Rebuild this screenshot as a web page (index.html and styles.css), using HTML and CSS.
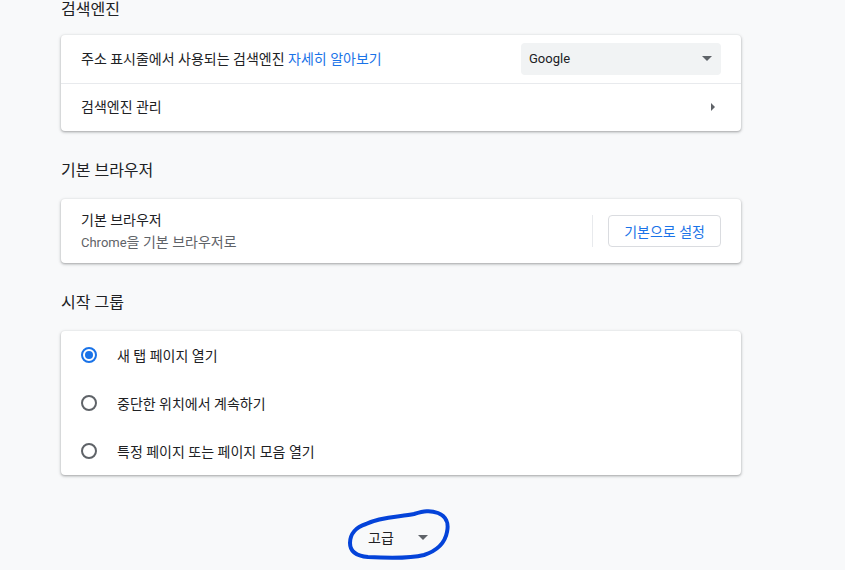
FILE: index.html
```html
<!DOCTYPE html>
<html lang="ko">
<head>
    <meta charset="UTF-8">
    <title>설정</title>
    <link rel="stylesheet" href="styles.css">
</head>
<body>
    <main class="page">
        <h2 class="section-title first">검색엔진</h2>
        <div class="card">
            <div class="row">
                <div class="row-label">주소 표시줄에서 사용되는 검색엔진 <a href="#" class="link">자세히 알아보기</a></div>
                <div class="select">
                    <span class="latin">Google</span>
                    <span class="select-arrow"></span>
                </div>
            </div>
            <div class="row divided">
                <div class="row-label">검색엔진 관리</div>
                <span class="sub-arrow"></span>
            </div>
        </div>

        <h2 class="section-title">기본 브라우저</h2>
        <div class="card">
            <div class="row tall">
                <div class="row-label">
                    <div>기본 브라우저</div>
                    <div class="secondary"><span class="latin">Chrome</span>을 기본 브라우저로</div>
                </div>
                <div class="separator"></div>
                <button type="button" class="btn">기본으로 설정</button>
            </div>
        </div>

        <h2 class="section-title">시작 그룹</h2>
        <div class="card">
            <label class="radio-row">
                <span class="radio checked"></span>
                <span>새 탭 페이지 열기</span>
            </label>
            <label class="radio-row">
                <span class="radio"></span>
                <span>중단한 위치에서 계속하기</span>
            </label>
            <label class="radio-row">
                <span class="radio"></span>
                <span>특정 페이지 또는 페이지 모음 열기</span>
            </label>
        </div>

        <div class="advanced">
            <span>고급</span>
            <span class="select-arrow"></span>
            <!-- 손으로 그린 표시 -->
            <svg class="scribble" width="110" height="54" viewBox="0 0 110 54">
                <path d="M20 17 C 35 9, 55 10, 68 7 C 78 4, 84 3, 92 6 C 100 9, 103 16, 101 25 C 99 36, 90 44, 78 48 C 62 52, 40 51, 22 50 C 10 49, 4 44, 4 36 C 4 27, 10 20, 20 17 Z"
                      fill="none" stroke="#0443d9" stroke-width="4" stroke-linecap="round" stroke-linejoin="round"/>
            </svg>
        </div>
    </main>
</body>
</html>
```

FILE: styles.css
```css
body {
    margin: 0;
    background-color: #f8f9fa;
    font-family: Roboto, "Noto Sans CJK KR", sans-serif;
    font-size: 14px;
    color: #202124;
    height: 570px;
    overflow: hidden;
}

.latin {
    font-size: 13px;
}

.page {
    width: 680px;
    margin-left: 61px;
}

.section-title {
    font-size: 16px;
    font-weight: 400;
    line-height: 20px;
    margin: 30px 0 0 0;
    padding-bottom: 18px;
    color: #202124;
}

.section-title.first {
    margin-top: 0;
    padding-bottom: 15px;
}

.card {
    background-color: white;
    border-radius: 4px;
    box-shadow: 0 1px 2px rgba(60, 64, 67, 0.3), 0 1px 3px 1px rgba(60, 64, 67, 0.15);
}

.row {
    display: flex;
    align-items: center;
    height: 48px;
    padding: 0 20px;
}

.row.divided {
    border-top: 1px solid #e8eaed;
    height: 48px;
    padding-bottom: 1px;
    box-sizing: border-box;
}

.row.tall {
    height: 64px;
}

.row-label {
    flex: 1;
    line-height: 22px;
}

.secondary {
    color: #5f6368;
}

.link {
    color: #1a73e8;
    text-decoration: none;
}

.select {
    width: 200px;
    height: 32px;
    box-sizing: border-box;
    background-color: #f1f3f4;
    border-radius: 4px;
    display: flex;
    align-items: center;
    justify-content: space-between;
    padding: 0 9px 1px 8px;
}

.select-arrow {
    width: 0;
    height: 0;
    border-left: 5px solid transparent;
    border-right: 5px solid transparent;
    border-top: 5px solid #5f6368;
}

.sub-arrow {
    width: 0;
    height: 0;
    border-top: 4px solid transparent;
    border-bottom: 4px solid transparent;
    border-left: 4px solid #5f6368;
    margin-right: 6px;
}

.separator {
    width: 1px;
    height: 32px;
    background-color: #e8eaed;
    margin-right: 15px;
}

.btn {
    height: 32px;
    padding: 0 15px;
    background-color: white;
    border: 1px solid #dadce0;
    border-radius: 4px;
    color: #1a73e8;
    font-family: inherit;
    font-size: 14px;
}

.radio-row {
    display: flex;
    align-items: center;
    height: 48px;
    padding: 0 20px 1px;
    box-sizing: border-box;
}

.radio {
    width: 16px;
    height: 16px;
    box-sizing: border-box;
    border: 2px solid #5f6368;
    border-radius: 50%;
    margin-right: 20px;
    position: relative;
}

.radio.checked {
    border-color: #1a73e8;
}

.radio.checked::after {
    content: "";
    position: absolute;
    left: 2px;
    top: 2px;
    width: 8px;
    height: 8px;
    border-radius: 50%;
    background-color: #1a73e8;
}

.advanced {
    position: relative;
    display: flex;
    align-items: center;
    justify-content: center;
    gap: 24px;
    margin-top: 51px;
    height: 22px;
    padding-right: 6px;
}

.scribble {
    position: absolute;
    left: 285px;
    top: -19px;
}
```
